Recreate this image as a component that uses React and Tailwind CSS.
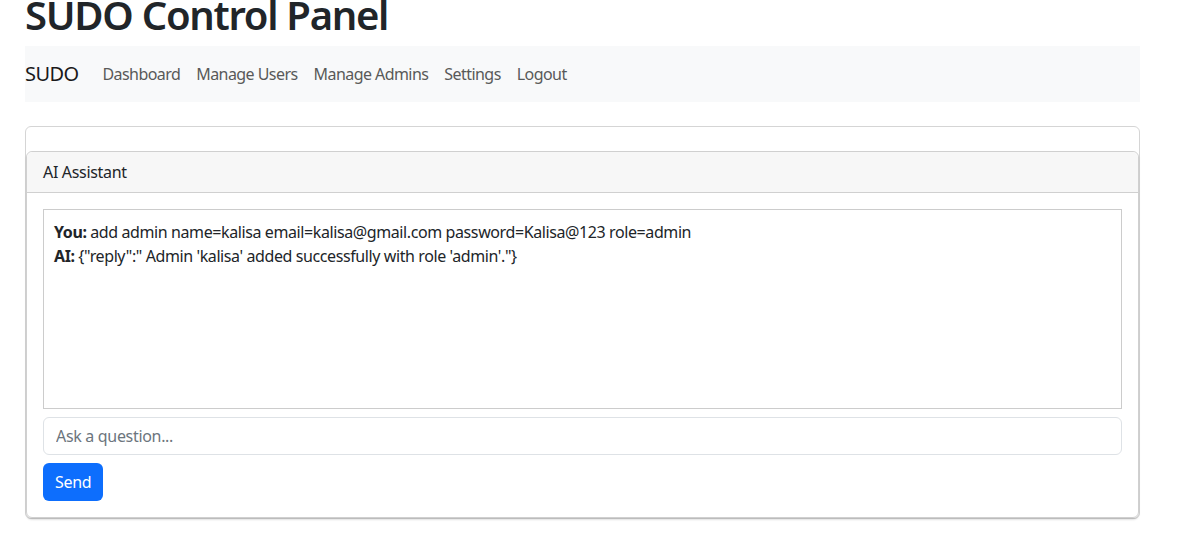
import { useState } from "react";

const navLinks = ["Dashboard", "Manage Users", "Manage Admins", "Settings", "Logout"];

const App = () => {
  const [question, setQuestion] = useState("");

  return (
    <div className="min-h-screen bg-white text-[#212529] font-['Noto_Sans',sans-serif] overflow-hidden">
      <div className="ml-[25px] w-[1115px]">
        {/* TITLE */}
        <h1 className="mt-[-9px] mb-[7px] text-[40px] leading-[48px] font-semibold tracking-[-0.032em]">SUDO Control Panel</h1>

        {/* NAVBAR */}
        <nav className="bg-[#f8f9fa] h-[56px] flex items-center">
          <span className="text-[20px] text-[#1a1a1a] mr-4 tracking-[-0.03em]">SUDO</span>
          <div className="flex">
            {navLinks.map((link) => (
              <a key={link} href="#" className="px-2 text-[16px] text-[#595959] tracking-[-0.035em]">
                {link}
              </a>
            ))}
          </div>
        </nav>

        {/* OUTER CARD */}
        <div className="mt-6 border border-[#d5d5d5] rounded-md pt-6">
          <div className="border border-[#d0d0d0] rounded-md shadow-[0_2px_2px_rgba(0,0,0,0.12)]">
            <div className="bg-[#f7f7f7] border-b border-[#d0d0d0] px-4 py-2 text-[16px] leading-6 rounded-t-md tracking-[-0.02em]">
              AI Assistant
            </div>
            <div className="p-4">
              <div className="h-[200px] border border-[#cccccc] p-[10px] text-[16px] leading-6 tracking-[-0.025em]">
                <div>
                  <b>You:</b> add admin name=kalisa email=kalisa@gmail.com password=Kalisa@123 role=admin
                </div>
                <div>
                  <b>AI:</b> {'{"reply":" Admin \'kalisa\' added successfully with role \'admin\'."}'}
                </div>
              </div>
              <input
                className="mt-2 w-full h-[38px] border border-[#dee2e6] rounded-md px-3 text-[16px] tracking-[-0.02em] placeholder:text-[#6c757d] outline-none"
                placeholder="Ask a question..."
                value={question}
                onChange={(e) => setQuestion(e.target.value)}
              />
              <button className="mt-2 h-[38px] px-3 rounded-md bg-[#0d6efd] text-white text-[16px] tracking-[-0.02em]">Send</button>
            </div>
          </div>
        </div>
      </div>
    </div>
  );
};

export default App;
